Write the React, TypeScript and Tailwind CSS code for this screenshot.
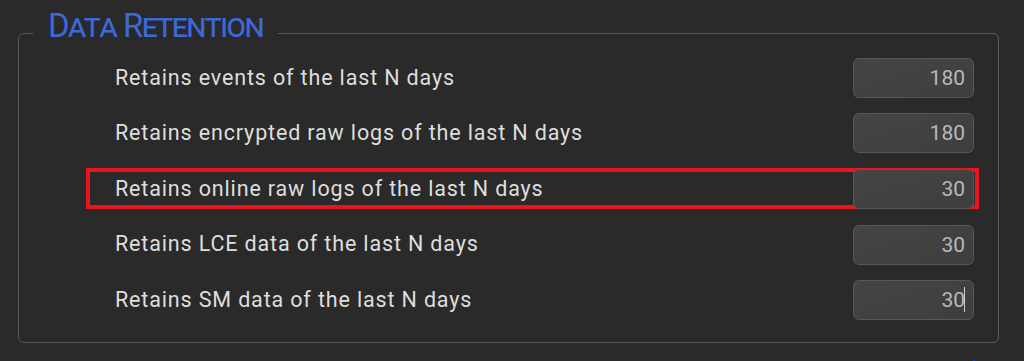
import React from 'react';

// Retention settings rows
const rows = [
  { label: 'Retains events of the last N days', value: '180' },
  { label: 'Retains encrypted raw logs of the last N days', value: '180' },
  { label: 'Retains online raw logs of the last N days', value: '30', highlight: true },
  { label: 'Retains LCE data of the last N days', value: '30' },
  { label: 'Retains SM data of the last N days', value: '30', caret: true },
];

export default function App() {
  return (
    <div className="w-[1024px] h-[361px] overflow-hidden bg-[#2a2a2a] font-['Roboto',sans-serif] pt-[9px]">
      <fieldset className="ml-[18px] w-[981px] border border-[#5a5a5a] rounded-[6px] px-0 pt-0 pb-[14px]">
        <legend className="ml-[14px] px-[15px] pb-[15px] text-[33px] leading-none tracking-[-1.6px] text-[#3d68d8] [font-variant:small-caps]">
          Data Retention
        </legend>
        <div className="flex flex-col pl-[67px] -mt-[7px]">
          {rows.map((row) => (
            <div key={row.label} className="h-[55.6px] flex items-center">
              <div
                className={
                  'relative w-[893px] h-[41px] flex items-center justify-between pl-[29px] pr-[5px] ' +
                  (row.highlight ? 'outline-4 -outline-offset-4 outline-[#e8141f]' : '')
                }
              >
                <span className="text-[21.5px] tracking-[0.85px] text-[#dedede]">{row.label}</span>
                <div className="relative">
                  <input
                    readOnly
                    defaultValue={row.value}
                    className="w-[121px] h-[40px] rounded-[6px] border border-[#585858] bg-gradient-to-br from-[#454545] to-[#3e3e3e] text-right pr-[8px] text-[21px] text-[#b8b8b8] outline-none"
                  />
                  {row.caret && (
                    <span className="absolute right-[9px] top-[7px] w-[1px] h-[25px] bg-[#d0d0d0]" />
                  )}
                </div>
              </div>
            </div>
          ))}
        </div>
      </fieldset>
      <div className="ml-[973px] mt-[16px] w-[2px] h-[2px] bg-[#1a2ae0]" />
    </div>
  );
}
